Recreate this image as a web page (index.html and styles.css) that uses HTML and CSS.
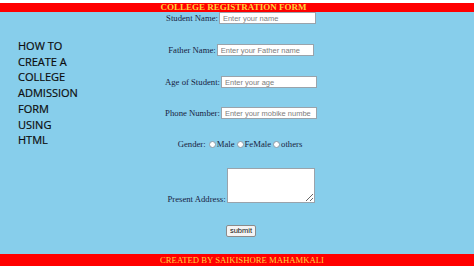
FILE: index.html
```html
<!DOCTYPE html>
<html>
<head>
<meta charset="utf-8">
<title>College Registration Form</title>
<link rel="stylesheet" href="styles.css">
</head>
<body>
<div class="page">
  <div class="topstrip"></div>
  <header class="banner head">COLLEGE REGISTRATION FORM</header>
  <main class="main">
    <aside class="howto">HOW TO<br>CREATE A<br>COLLEGE<br>ADMISSION<br>FORM<br>USING<br>HTML</aside>
    <form class="form">
      <div class="row r1"><label>Student Name:</label><input type="text" class="field w97" placeholder="Enter your name"></div>
      <div class="row r2"><label>Father Name:</label><input type="text" class="field w97" placeholder="Enter your Father name"></div>
      <div class="row r3"><label>Age of Student:</label><input type="text" class="field w96" placeholder="Enter your age"></div>
      <div class="row r4"><label>Phone Number:</label><input type="text" class="field w96" placeholder="Enter your mobike numbe"></div>
      <div class="row r5 gender"><label>Gender:</label>
        <span class="opt"><input type="radio" name="g" class="radio">Male</span>
        <span class="opt"><input type="radio" name="g" class="radio">FeMale</span>
        <span class="opt"><input type="radio" name="g" class="radio">others</span>
      </div>
      <div class="row r6 address"><label>Present Address:</label><textarea class="area"></textarea></div>
      <div class="row r7"><button type="button" class="submit">submit</button></div>
    </form>
  </main>
  <footer class="banner foot">CREATED BY SAIKISHORE MAHAMKALI</footer>
</div>
</body>
</html>
```
FILE: styles.css
```css
html, body {
  margin: 0;
  padding: 0;
  background: #87ceeb;
}
.page {
  width: 474px;
  height: 266px;
  display: flex;
  flex-direction: column;
  overflow: hidden;
  font-family: "Liberation Serif", "Times New Roman", serif;
}
.topstrip {
  height: 3px;
  background: #ffffff;
}
.banner {
  background: #ff0000;
  color: #ffd23c;
  text-align: center;
  white-space: nowrap;
}
.head {
  height: 9px;
  font-size: 9px;
  line-height: 9px;
  font-weight: bold;
  padding-right: 7px;
}
.foot {
  height: 12px;
  font-size: 8.7px;
  line-height: 12px;
  padding-left: 10px;
  margin-top: auto;
}
.main {
  display: grid;
  flex: 1;
}
.howto {
  grid-area: 1 / 1;
  justify-self: start;
  align-self: start;
  padding: 26px 0 0 18px;
  font-family: "Open Sans", "Noto Sans", sans-serif;
  font-size: 11px;
  line-height: 15.7px;
  color: #0d0d0d;
  -webkit-text-stroke: 0.2px #0d0d0d;
}
.form {
  grid-area: 1 / 1;
  display: flex;
  flex-direction: column;
  align-items: center;
  padding-left: 8px;
  color: #17233f;
  font-size: 8.7px;
}
.row {
  display: flex;
  align-items: center;
  gap: 1px;
  height: 12px;
  white-space: nowrap;
}
.r2, .r3 { margin-top: 20px; }
.r4, .r5 { margin-top: 19px; }
.r6 { margin-top: 18px; height: 35px; align-items: flex-end; }
.r7 { margin-top: 22px; }
.field {
  box-sizing: border-box;
  height: 12px;
  margin: 0;
  padding: 0 3px;
  border: 1px solid #9aa3ab;
  background: #fff;
  font-family: "Liberation Sans", Arial, sans-serif;
  font-size: 7.5px;
  color: #333;
}
.field::placeholder { color: #7d7d7d; }
.w97 { width: 97px; }
.w96 { width: 96px; }
.gender { gap: 0; }
.gender label { margin-right: 3px; }
.opt {
  display: inline-flex;
  align-items: center;
  margin-right: 2px;
}
.radio {
  appearance: none;
  -webkit-appearance: none;
  width: 7px;
  height: 7px;
  margin: 0 1px 0 0;
  border-radius: 50%;
  border: 1px solid #8a9aa6;
  background: #fff;
  box-sizing: border-box;
}
.address label { line-height: 9px; margin-bottom: -1px; }
.area {
  box-sizing: border-box;
  width: 88px;
  height: 35px;
  margin: 0;
  border: 1px solid #9aa3ab;
  background: #fff;
  resize: both;
}
.submit {
  box-sizing: border-box;
  width: 30px;
  height: 12px;
  padding: 0;
  margin: 0;
  border: 1px solid #8b8b8b;
  border-radius: 2px;
  background: #f4f4f4;
  font-family: "Liberation Sans", Arial, sans-serif;
  font-size: 7.5px;
  color: #111;
  line-height: 10px;
}
```
